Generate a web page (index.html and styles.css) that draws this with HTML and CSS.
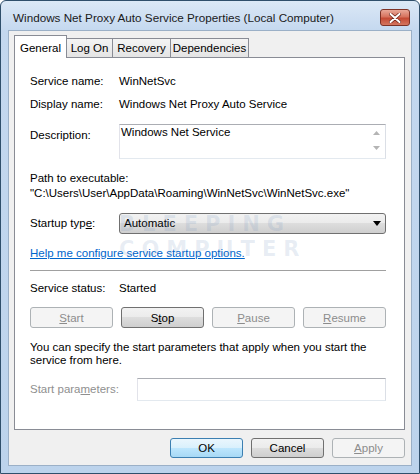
FILE: index.html
```html
<!DOCTYPE html>
<html lang="en">
<head>
  <meta charset="UTF-8">
  <title>Windows Net Proxy Auto Service Properties (Local Computer)</title>
  <link rel="stylesheet" href="styles.css">
</head>
<body>
  <div class="window">
    <!-- Title bar -->
    <div class="titlebar">
      <span class="title">Windows Net Proxy Auto Service Properties (Local Computer)</span>
      <button class="close-btn" aria-label="Close">
        <svg width="12" height="10" viewBox="0 0 12 10">
          <path d="M1.5 1 L10.5 9 M10.5 1 L1.5 9" stroke="#6e2418" stroke-width="3.4" stroke-linecap="round"/>
          <path d="M1.5 1 L10.5 9 M10.5 1 L1.5 9" stroke="#fff" stroke-width="2" stroke-linecap="round"/>
        </svg>
      </button>
    </div>

    <div class="client">
      <!-- Tabs -->
      <div class="tabs">
        <div class="tab tab-general active">General</div>
        <div class="tab tab-logon">Log On</div>
        <div class="tab tab-recovery">Recovery</div>
        <div class="tab tab-deps">Dependencies</div>
      </div>

      <!-- General page -->
      <div class="panel">
        <div class="row">
          <span class="label">Service name:</span>
          <span>WinNetSvc</span>
        </div>
        <div class="row row-display">
          <span class="label">Display name:</span>
          <span>Windows Net Proxy Auto Service</span>
        </div>
        <div class="row row-desc">
          <span class="label">Description:</span>
          <div class="desc-box">
            <div class="desc-text">Windows Net Service</div>
            <div class="scrollbar">
              <svg width="7" height="4" viewBox="0 0 7 4"><path d="M0 4 L3.5 0 L7 4 Z" fill="#b4b4b4"/></svg>
              <svg width="7" height="4" viewBox="0 0 7 4"><path d="M0 0 L7 0 L3.5 4 Z" fill="#b4b4b4"/></svg>
            </div>
          </div>
        </div>
        <div class="path-label">Path to executable:</div>
        <div class="path-value">"C:\Users\User\AppData\Roaming\WinNetSvc\WinNetSvc.exe"</div>
        <div class="row row-startup">
          <span class="label">Startup typ<u>e</u>:</span>
          <div class="combo">
            <span>Automatic</span>
            <svg width="8" height="5" viewBox="0 0 8 5"><path d="M0 0 L8 0 L4 5 Z" fill="#000"/></svg>
          </div>
        </div>
        <a class="help-link" href="#">Help me configure service startup options.</a>
        <div class="separator"></div>
        <div class="row row-status">
          <span class="label">Service status:</span>
          <span>Started</span>
        </div>
        <div class="svc-buttons">
          <button class="btn" disabled><u>S</u>tart</button>
          <button class="btn">S<u>t</u>op</button>
          <button class="btn" disabled><u>P</u>ause</button>
          <button class="btn" disabled><u>R</u>esume</button>
        </div>
        <p class="note">You can specify the start parameters that apply when you start the service from here.</p>
        <div class="row row-params">
          <span class="label label-disabled">Start para<u>m</u>eters:</span>
          <div class="param-input"></div>
        </div>
      </div>

      <!-- Dialog buttons -->
      <div class="dialog-buttons">
        <button class="btn btn-default">OK</button>
        <button class="btn">Cancel</button>
        <button class="btn" disabled><u>A</u>pply</button>
      </div>
    </div>

    <div class="watermark">BLEEPING<br>COMPUTER</div>
  </div>
</body>
</html>
```

FILE: styles.css
```css
* {
  box-sizing: border-box;
}

body {
  margin: 0;
  font-family: "Liberation Sans", Arial, sans-serif;
  font-size: 11.5px;
  color: #000;
  background: #fff;
}

.window {
  position: relative;
  width: 420px;
  height: 474px;
  border: 1px solid #2f4f6b;
  border-radius: 6px 6px 0 0;
  background: linear-gradient(#dbe8f6, #c4d8ef 30px, #bcd3ec);
  display: flex;
  flex-direction: column;
  overflow: hidden;
}

/* Title bar */
.titlebar {
  height: 29px;
  flex: none;
  display: flex;
  align-items: center;
  justify-content: space-between;
  padding: 4px 9px 0 12px;
}

.title {
  font-size: 11.7px;
  color: #1a1a1a;
}

.close-btn {
  width: 30px;
  height: 17px;
  padding: 0;
  border: 1px solid #7d3226;
  border-radius: 3px;
  background: linear-gradient(#e9a898, #d6735e 45%, #c44a34 55%, #d4765f);
  display: flex;
  align-items: center;
  justify-content: center;
}

/* Client area */
.client {
  flex: 1;
  margin: 0 7px 7px;
  background: #f0f0f0;
  border: 1px solid #9bb0c7;
  padding: 4px 6px 0 5px;
}

.tabs {
  display: flex;
  align-items: flex-end;
  height: 23px;
  margin-bottom: -1px;
}

.tab {
  height: 19px;
  margin-bottom: 1px;
  margin-left: -1px;
  border: 1px solid #898c95;
  border-bottom: none;
  background: linear-gradient(#f4f4f4, #e4e4e4);
  text-align: center;
  line-height: 18px;
}

.tab.active {
  height: 23px;
  margin: 0;
  padding-top: 2px;
  line-height: 20px;
  background: #fff;
  position: relative;
  z-index: 1;
}

.tab-general { width: 53px; }
.tab-logon { width: 47px; }
.tab-recovery { width: 59px; }
.tab-deps { width: 79px; }

.panel {
  height: 373px;
  background: #fff;
  border: 1px solid #898c95;
  padding: 16px 18px 0 15px;
}

.row {
  display: flex;
  align-items: center;
  line-height: 15px;
}

.label {
  width: 89px;
  flex: none;
}

.label-disabled {
  color: #8f8f8f;
}

.row-display {
  margin-top: 8px;
}

.row-desc {
  margin-top: 12px;
  align-items: flex-start;
}

.row-desc .label {
  margin-top: 4px;
}

.desc-box {
  width: 267px;
  height: 35px;
  border: 1px solid #abadb3;
  border-color: #abadb3 #dbdfe6 #e3e9ef #e2e3ea;
  display: flex;
}

.desc-text {
  flex: 1;
  padding-left: 1px;
}

.scrollbar {
  width: 17px;
  display: flex;
  flex-direction: column;
  justify-content: space-between;
  align-items: center;
  padding: 6px 0 8px;
}

.path-label {
  margin-top: 12px;
  line-height: 15px;
}

.path-value {
  line-height: 15px;
}

.row-startup {
  margin-top: 12px;
}

.combo {
  width: 267px;
  height: 21px;
  border: 1px solid #707070;
  border-radius: 3px;
  background: linear-gradient(#f2f2f2, #ebebeb 50%, #dddddd 50%, #cfcfcf);
  display: flex;
  align-items: center;
  justify-content: space-between;
  padding: 0 4px 0 4px;
}

.help-link {
  display: block;
  margin-top: 12px;
  line-height: 15px;
  color: #0066cc;
  width: max-content;
}

.separator {
  margin-top: 9px;
  height: 1px;
  background: #a0a0a0;
}

.row-status {
  margin-top: 10px;
}

.svc-buttons {
  display: flex;
  justify-content: space-between;
  margin-top: 11px;
}

.svc-buttons .btn {
  width: 83px;
  height: 21px;
}

.btn {
  font: inherit;
  color: #000;
  padding: 0;
  border: 1px solid #707070;
  border-radius: 3px;
  background: linear-gradient(#f2f2f2, #ebebeb 50%, #dddddd 50%, #cfcfcf);
}

.btn:disabled {
  color: #8c8c8c;
  border-color: #adb2b5;
  background: #f4f4f4;
}

.btn-default {
  border-color: #3c7fb1;
  background: linear-gradient(#eaf6fd, #d9f0fc 50%, #bee6fd 50%, #a7d9f5);
}

.note {
  margin: 13px 0 0;
  line-height: 13px;
}

.row-params {
  margin-top: 11px;
}

.row-params .label {
  width: 107px;
}

.param-input {
  width: 249px;
  height: 23px;
  border: 1px solid #abadb3;
  border-color: #abadb3 #dbdfe6 #e3e9ef #e2e3ea;
  background: #fff;
}

.dialog-buttons {
  display: flex;
  justify-content: flex-end;
  gap: 8px;
  margin-top: 8px;
}

.dialog-buttons .btn {
  width: 73px;
  height: 20px;
}

/* faint site watermark over the dialog */
.watermark {
  position: absolute;
  left: 118px;
  top: 211px;
  font-family: "DejaVu Sans", sans-serif;
  font-weight: bold;
  font-size: 21px;
  line-height: 25px;
  letter-spacing: 7px;
  color: rgba(110, 145, 190, 0.16);
  pointer-events: none;
}
```
